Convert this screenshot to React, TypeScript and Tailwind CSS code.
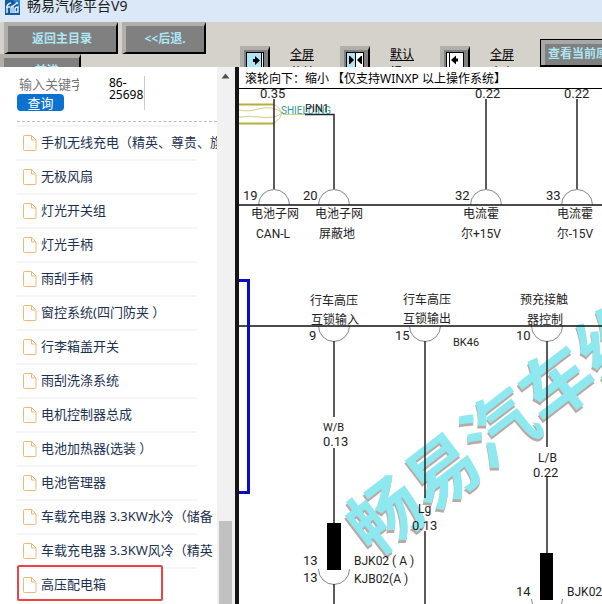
import React from "react";

const parts = [
  "手机无线充电（精英、尊贵、旗",
  "无极风扇",
  "灯光开关组",
  "灯光手柄",
  "雨刮手柄",
  "窗控系统(四门防夹 ）",
  "行李箱盖开关",
  "雨刮洗涤系统",
  "电机控制器总成",
  "电池加热器(选装 ）",
  "电池管理器",
  "车载充电器 3.3KW水冷（储备",
  "车载充电器 3.3KW风冷（精英",
  "高压配电箱",
];

function FileIcon() {
  return (
    <svg width="14" height="16" viewBox="0 0 14 16" fill="none" stroke="#efb878" className="shrink-0" aria-hidden="true">
      <path d="M1.5 .5H8.5L13 5V14.5Q13 15.5 12 15.5H1.5Q.5 15.5 .5 14.5V1.5Q.5 .5 1.5 .5ZM8.5 .5V5H13" />
    </svg>
  );
}

function NavButton({ children, width }: { children: React.ReactNode; width: string }) {
  return (
    <button
      className={`${width} block h-8 border-4 border-t-[#b2aeaa] border-l-[#b2aeaa] border-r-black border-b-black border-r-2 border-b-2 bg-[#808080] text-xs font-bold text-[#aee6f4]`}
    >
      {children}
    </button>
  );
}

function ViewButton({ kind, label }: { kind: "left" | "both" | "right"; label: string }) {
  return (
    <div className="flex w-[100px] shrink-0 items-start">
      <button
        aria-label={label}
        className="flex h-8 w-[30px] shrink-0 items-start border-4 border-r-2 border-t-[#b2aeaa] border-l-[#b2aeaa] border-r-black border-b-black bg-[#808080] pl-0.5"
      >
        <svg width="19" height="24" viewBox="0 0 19 24" className="mt-0.5">
          <rect width="18" height="22" fill="#000" />
          <rect x="1" y="1" width="16" height="20" fill={kind === "right" ? "#fff" : "#aee6f4"} />
          {kind === "left" && <path d="M15 1h2v20h-2z" fill="#fff" />}
          {kind === "both" && <path d="M10 1h7v20h-7z" fill="#fff" />}
          {kind === "left" && <path d="M15.500 1v20" stroke="#000" />}
          {kind === "both" && <path d="M9.500 1v20" stroke="#000" />}
          {kind === "right" && <path d="M3.500 1v20" stroke="#000" />}
          {kind === "left" && <path d="M9 4l5 4.500-5 4.500v-3H7V7h2z" />}
          {kind === "both" && <path d="M3 4h1l4 4-4 4H3zM16 4h-1l-4 4 4 4h1z" />}
          {kind === "right" && <path d="M10 3.500L5 8l5 4.500v-3h2v-3h-2z" />}
        </svg>
      </button>
      <a href="#view" className="ml-5 w-6 text-xs leading-[18px] text-black underline">
        {label}
      </a>
    </div>
  );
}

function Header() {
  return (
    <header className="h-[67px] shrink-0 overflow-hidden bg-[#d5d1cb]">
      <div className="flex h-[22px] items-start gap-[7px] bg-[#dae8f8] pl-[5px]">
        <svg width="15" height="15" viewBox="0 0 15 15" aria-hidden="true">
          <rect width="15" height="15" fill="#155a9c" />
          <path d="M8 0h7v8z" fill="#2f83c8" />
          <path d="M2 13V7q0-3 4-4M1 7h4M6 13V8q0-2 2-2v7M8 6l4-3M10 13V9q0-2 3-2v5h-3M11 3h2" stroke="#d9efff" strokeWidth="1.5" fill="none" />
        </svg>
        <h1 className="-mt-1 text-sm leading-5 text-[#202020]">畅易汽修平台V9</h1>
      </div>
      <div className="flex">
        <div className="w-60 shrink-0">
          <div className="flex gap-1 pl-1">
            <NavButton width="w-[114px]">返回主目录</NavButton>
            <NavButton width="w-[84px]">&lt;&lt;后退.</NavButton>
          </div>
          <NavButton width="w-[81px]">&gt;&gt;前进.</NavButton>
        </div>
        <div className="flex shrink-0 pt-6">
          <ViewButton kind="left" label="全屏菜单" />
          <ViewButton kind="both" label="默认视图" />
          <ViewButton kind="right" label="全屏内容" />
        </div>
        <div className="min-w-0 flex-1 overflow-hidden pt-[17px]">
          <button className="block h-7 w-[120px] border border-b-2 border-black">
            <span className="block h-full border-4 border-r-2 border-b-0 border-[#a8a8a8] bg-[#808080] pl-[3px] text-left text-xs leading-5 font-bold whitespace-nowrap text-[#aee6f4]">
              查看当前原图
            </span>
          </button>
        </div>
      </div>
    </header>
  );
}

function Sidebar() {
  return (
    <aside className="flex w-[235px] shrink-0 bg-white">
      <div className="min-w-0 flex-1 overflow-hidden pl-[17px]">
        <form className="flex h-[55px] border-b border-dashed border-[#bbb] pt-[9px]" onSubmit={(e) => e.preventDefault()}>
          <div className="w-[92px]">
            <input
              aria-label="输入关键字"
              placeholder="输入关键字"
              className="block h-[18px] w-[62px] pl-0.5 text-[13px] outline-none placeholder:text-[#757575]"
            />
            <button className="block h-[17px] w-[47px] rounded bg-[#0b72d0] text-[13px] leading-4 text-white">查询</button>
          </div>
          <p className="h-[34px] w-9 border-r border-[#ccc] pt-px text-xs leading-3 text-black">
            86-
            <br />
            25698
          </p>
        </form>
        <ul className="pt-[3px]">
          {parts.map((name, i) => (
            <li key={name} className="relative h-[34px] w-[180px] border-t-2 border-[#f5f5f5]">
              <a href={`#part-${i}`} className="flex h-8 items-center gap-1 pl-1.5 text-[13px] whitespace-nowrap text-[#1c3150]">
                <FileIcon />
                <span>{name}</span>
              </a>
              {i === 13 && <span className="absolute -top-1 left-0 h-9 w-[146px] rounded-xs border-2 border-[#ea4444]" />}
            </li>
          ))}
        </ul>
      </div>
      <div className="flex w-[18px] shrink-0 flex-col justify-between bg-[#f1f1f1]">
        <svg width="18" height="18" viewBox="0 0 18 18" aria-hidden="true">
          <path d="M8.500 6.500l4 5h-8z" fill="#505050" />
        </svg>
        <div className="ml-0.5 h-[83px] w-[13px] bg-[#c1c1c1]" />
      </div>
    </aside>
  );
}

function Diagram() {
  return (
    <svg width="100%" height="100%" className="block min-h-0 flex-1 overflow-hidden" role="img" aria-label="高压配电箱电路图">
      <g transform="translate(-239 -89)">
        <g fill="none" stroke="#b5ad3c" strokeWidth="2">
          <path d="M239 104.500H274M239 123.500H274" />
          <path d="M239 110Q250 112 258 109Q274 105 282 113Q276 119 258 117Q250 116 239 117M274 104Q289 114 274 123M283 114.500H305" strokeWidth="1" stroke="#d2cc85" />
        </g>
        <g fill="none" stroke="#888">
          <path d="M258.500 205a15.500 15.500 0 0 1 31 0M318.500 205a15.500 15.500 0 0 1 31 0M470.500 205a15.500 15.500 0 0 1 31 0M561.500 205a15.500 15.500 0 0 1 31 0" />
          <path d="M318.500 326a15.500 15.500 0 0 0 31 0M409.500 326a15.500 15.500 0 0 0 31 0M531.500 326a15.500 15.500 0 0 0 31 0" />
          <path d="M318.500 569a15.500 15.500 0 0 0 31 0M531.500 599a15.500 15.500 0 0 0 31 0" />
        </g>
        <g
          fontFamily="'Noto Sans CJK SC', sans-serif"
          fontSize="72"
          fontWeight="700"
          textAnchor="middle"
          transform="translate(385 515) rotate(-37.500)"
        >
          <text x="142" y="29" fill="#b9a9a5">畅易汽车维</text>
          <text x="144" y="27" fill="#8ee8f0">畅易汽车维</text>
        </g>
        <path
          d="M274 99V189M334 189V114.500H305M486 99V189M577 99V189M334 341V417M334 448V523M334 584V700M425 341V498M425 531V700M547 341V447M547 477V553M547 614V700"
          fill="none"
          stroke="#262626"
          strokeWidth="1.500"
        />
        <path d="M239 205H2000M239 326H2000" stroke="#111" strokeWidth="1.500" />
        <path d="M239 280.500H248.500V492.500H239" fill="none" stroke="#0c0cc0" strokeWidth="3" />
        <path d="M327 523h14v47h-14zM540 553h13v47h-13z" />
        <g fontFamily="Roboto, 'Noto Sans CJK SC', sans-serif" fontSize="13" fill="#222">
          <text x="260" y="98">0.35</text>
          <text x="475" y="98">0.22</text>
          <text x="564" y="98">0.22</text>
          <text x="281" y="114" fontSize="10" fill="#2f9c9c">SHIELDING</text>
          <text x="305" y="112" fontSize="11">PIN1</text>
          <text x="243" y="200">19</text>
          <text x="303" y="200">20</text>
          <text x="455" y="200">32</text>
          <text x="546" y="200">33</text>
          <text x="309" y="340">9</text>
          <text x="395" y="340">15</text>
          <text x="516" y="340">10</text>
          <text x="453" y="346" fontSize="11">BK46</text>
          <text x="323" y="431" fontSize="11">W/B</text>
          <text x="323" y="446">0.13</text>
          <text x="418" y="513" fontSize="12">Lg</text>
          <text x="412" y="530">0.13</text>
          <text x="538" y="462" fontSize="12">L/B</text>
          <text x="533" y="477">0.22</text>
          <text x="303" y="565">13</text>
          <text x="303" y="582">13</text>
          <text x="354" y="565" fontSize="12">BJK02 ( A )</text>
          <text x="354" y="583" fontSize="12">KJB02(A )</text>
          <text x="516" y="596">14</text>
          <text x="516" y="613">14</text>
          <text x="567" y="596" fontSize="12">BJK02 ( A )</text>
          <text x="567" y="614" fontSize="12">KJB02(A )</text>
        </g>
        <g fontFamily="Roboto, 'Noto Sans CJK SC', sans-serif" fontSize="12" fill="#222" textAnchor="middle">
          <text x="275" y="218">电池子网</text>
          <text x="273" y="238">CAN-L</text>
          <text x="339" y="218">电池子网</text>
          <text x="337" y="238">屏蔽地</text>
          <text x="481" y="218">电流霍</text>
          <text x="481" y="238">尔+15V</text>
          <text x="575" y="218">电流霍</text>
          <text x="575" y="238">尔-15V</text>
          <text x="334" y="305">行车高压</text>
          <text x="335" y="324">互锁输入</text>
          <text x="427" y="304">行车高压</text>
          <text x="427" y="323">互锁输出</text>
          <text x="544" y="304">预充接触</text>
          <text x="545" y="324">器控制</text>
        </g>
      </g>
    </svg>
  );
}

export default function App() {
  return (
    <div className="flex h-screen flex-col overflow-hidden bg-white font-['Noto_Sans','Noto_Sans_CJK_SC',sans-serif]">
      <Header />
      <div className="flex min-h-0 flex-1">
        <Sidebar />
        <main className="flex min-w-0 flex-1 flex-col border-l-4 border-[#151515] bg-white">
          <p className="h-[22px] shrink-0 overflow-hidden border-b border-black pl-1.5 text-xs leading-6 whitespace-nowrap text-black">
            滚轮向下：缩小 【仅支持WINXP 以上操作系统】
          </p>
          <Diagram />
        </main>
      </div>
    </div>
  );
}
